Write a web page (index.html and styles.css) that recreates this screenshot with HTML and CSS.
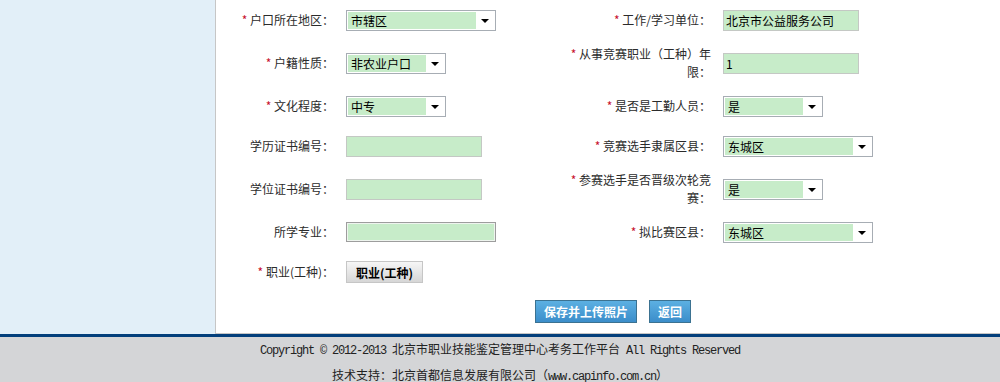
FILE: index.html
```html
<!DOCTYPE html>
<html lang="zh-CN">
<head>
    <meta charset="UTF-8">
    <title>考务工作平台 - 报名信息</title>
    <link rel="stylesheet" href="styles.css">
</head>
<body>
    <div class="page">
        <div class="side"></div>
        <div class="main">
            <div class="form">
                <div class="lbl"><span class="req">*</span> 户口所在地区：</div>
                <div class="fld"><span class="sel w150"><span class="val">市辖区</span><span class="arr"></span></span></div>
                <div class="lbl"><span class="req">*</span> 工作/学习单位：</div>
                <div class="fld"><input class="txt" type="text" value="北京市公益服务公司"></div>

                <div class="lbl"><span class="req">*</span> 户籍性质：</div>
                <div class="fld"><span class="sel w100"><span class="val">非农业户口</span><span class="arr"></span></span></div>
                <div class="lbl"><span class="req">*</span> 从事竞赛职业（工种）年限：</div>
                <div class="fld"><input class="txt" type="text" value="1"></div>

                <div class="lbl"><span class="req">*</span> 文化程度：</div>
                <div class="fld"><span class="sel w100"><span class="val">中专</span><span class="arr"></span></span></div>
                <div class="lbl"><span class="req">*</span> 是否是工勤人员：</div>
                <div class="fld"><span class="sel w100"><span class="val">是</span><span class="arr"></span></span></div>

                <div class="lbl">学历证书编号：</div>
                <div class="fld"><input class="txt" type="text" value=""></div>
                <div class="lbl"><span class="req">*</span> 竞赛选手隶属区县：</div>
                <div class="fld"><span class="sel w150"><span class="val">东城区</span><span class="arr"></span></span></div>

                <div class="lbl">学位证书编号：</div>
                <div class="fld"><input class="txt" type="text" value=""></div>
                <div class="lbl"><span class="req">*</span> 参赛选手是否晋级次轮竞赛：</div>
                <div class="fld"><span class="sel w100"><span class="val">是</span><span class="arr"></span></span></div>

                <div class="lbl">所学专业：</div>
                <div class="fld"><input class="txt wide" type="text" value=""></div>
                <div class="lbl"><span class="req">*</span> 拟比赛区县：</div>
                <div class="fld"><span class="sel w150"><span class="val">东城区</span><span class="arr"></span></span></div>

                <div class="lbl"><span class="req">*</span> 职业(工种)：</div>
                <div class="fld"><button class="btn-gray" type="button">职业(工种)</button></div>
                <div class="lbl"></div>
                <div class="fld"></div>
            </div>
            <div class="actions">
                <button class="btn-blue" type="button">保存并上传照片</button>
                <button class="btn-blue" type="button">返回</button>
            </div>
        </div>
    </div>

    <div class="footer">
        <p><span class="en">Copyright © 2012-2013 </span>北京市职业技能鉴定管理中心考务工作平台<span class="en"> All Rights Reserved</span></p>
        <p>技术支持：北京首都信息发展有限公司（<span class="en">www.capinfo.com.cn</span>）</p>
    </div>
</body>
</html>
```

FILE: styles.css
```css
body {
    margin: 0;
    padding: 0;
    font-family: "Noto Sans CJK SC", "Liberation Sans", sans-serif;
    font-size: 12px;
    color: #333;
    background-color: #fff;
}
.page {
    display: flex;
    height: 334px;
}
.side {
    width: 215px;
    background-color: #e2eff8;
    border-right: 1px solid #c6c6c6;
}
.main {
    flex: 1;
    background-color: #fff;
    border-bottom: 1px solid #c6c6c6;
}
.form {
    display: grid;
    grid-template-columns: 118px 234px 143px 1fr;
    grid-auto-rows: minmax(40px, auto);
}
.lbl {
    align-self: center;
    text-align: right;
    line-height: 18px;
    padding: 5px 0;
    color: #2b2b2b;
}
.req {
    color: #c8102e;
}
.fld {
    align-self: center;
    padding-left: 12px;
    display: flex;
    align-items: center;
}
.sel {
    display: flex;
    box-sizing: border-box;
    height: 21px;
    padding: 1px;
    border: 1px solid #a7adb4;
    background-color: #fff;
}
.w150 {
    width: 150px;
}
.w100 {
    width: 100px;
}
.sel .val {
    flex: 1;
    background-color: #c7ecc9;
    color: #000;
    line-height: 17px;
    padding-left: 3px;
}
.sel .arr {
    width: 18px;
    display: flex;
    align-items: center;
    justify-content: center;
}
.sel .arr::after {
    content: "";
    border-left: 4px solid transparent;
    border-right: 4px solid transparent;
    border-top: 4px solid #000;
    margin-top: 1px;
}
.txt {
    box-sizing: border-box;
    width: 136px;
    height: 21px;
    margin: 0;
    padding: 0 2px;
    border: 1px solid #c4c8c4;
    background-color: #c7ecc9;
    font-family: "Noto Sans CJK SC", "Liberation Serif", serif;
    font-size: 12px;
    color: #000;
    outline: none;
}
.txt.wide {
    width: 150px;
    height: 20px;
    border: 1px solid #9d9d9d;
    box-shadow: inset 0 0 0 1px #eef4ee;
}
.btn-gray {
    box-sizing: border-box;
    width: 77px;
    height: 22px;
    margin: 0;
    padding: 0;
    border: 1px solid #c6c6c6;
    background: linear-gradient(#f6f6f6, #d6d6d6);
    font-family: "Noto Sans CJK SC", sans-serif;
    font-size: 12px;
    font-weight: bold;
    color: #000;
}
.actions {
    display: flex;
    justify-content: center;
    gap: 12px;
    margin-top: 8px;
    padding-left: 10px;
}
.btn-blue {
    height: 23px;
    margin: 0;
    padding: 0 8px;
    border: 1px solid #3b7291;
    background: linear-gradient(#5cb0e2, #3b8dca);
    font-family: "Noto Sans CJK SC", sans-serif;
    font-size: 12px;
    font-weight: bold;
    color: #fff;
}
.footer {
    height: 45px;
    border-top: 3px solid #033f7b;
    background-color: #d4d5d7;
    text-align: center;
    color: #222;
}
.footer p {
    margin: 0;
    line-height: 24px;
}
.en {
    font-family: "Liberation Mono", monospace;
    letter-spacing: -1.2px;
}
```
